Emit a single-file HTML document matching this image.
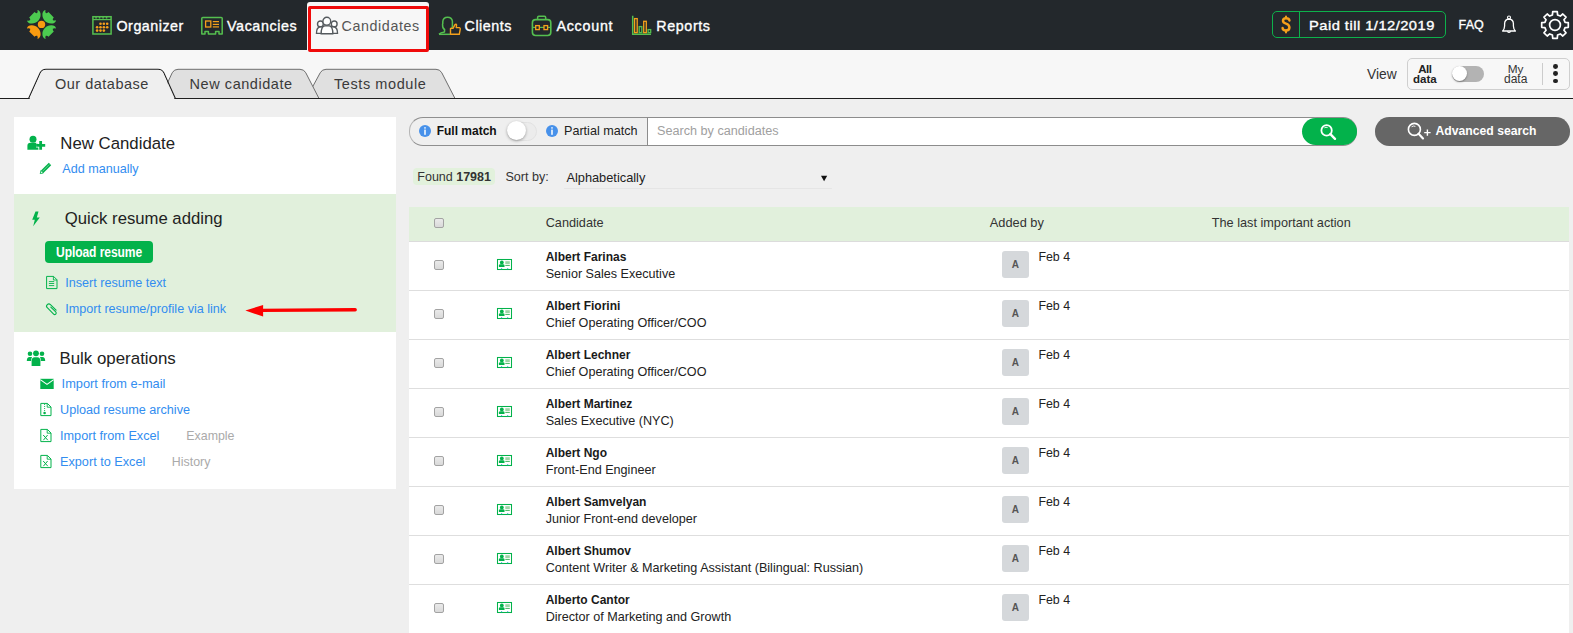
<!DOCTYPE html>
<html><head><meta charset="utf-8"><title>Candidates</title>
<style>
html,body{margin:0;padding:0}
body{width:1573px;height:633px;overflow:hidden;position:relative;background:#efefef;font-family:"Liberation Sans",sans-serif}
.t{position:absolute;white-space:nowrap;line-height:1}
svg{overflow:visible}
</style></head><body>
<div style="position:absolute;left:0px;top:0px;width:1573px;height:50px;background:#23282c"></div>
<div style="position:absolute;left:0px;top:50px;width:1573px;height:48px;background:#f7f7f7"></div>
<div style="position:absolute;left:0px;top:98px;width:1573px;height:1px;background:#1e1e1e"></div>
<div style="position:absolute;left:0px;top:99px;width:1573px;height:534px;background:#efefef"></div>
<svg style="position:absolute;left:0;top:0" width="80" height="50" viewBox="0 0 80 50">
<defs><path id="pt" d="M-4.0,-14.5 C-1.9,-14.3 -0.7,-11.8 -0.9,-9.7 C-0.8,-5.0 -5.0,-0.8 -9.7,-0.9 C-11.8,-0.7 -14.3,-1.9 -14.5,-4.0 Q-12.7,-3.4 -11.3,-4.3 Q-11.0,-6.0 -12.3,-7.0 L-7.0,-12.3 Q-6.0,-11.0 -4.3,-11.3 Q-3.4,-12.7 -4.1,-14.3Z"/></defs>
<g transform="translate(41.5,24.4)">
<use href="#pt" fill="#4ccb50"/>
<use href="#pt" fill="#4ccb50" transform="rotate(90)"/>
<use href="#pt" fill="#4ccb50" transform="rotate(180)"/>
<use href="#pt" fill="#f99b10" transform="rotate(270)"/>
<circle r="3.7" fill="#f99b10"/>
</g></svg>
<svg style="position:absolute;left:90px;top:14px" width="24" height="23" viewBox="0 0 24 23">
<rect x="2.9" y="2.7" width="18.2" height="17.3" fill="none" stroke="#55bf4f" stroke-width="1.5"/>
<line x1="2.9" y1="5.6" x2="21.1" y2="5.6" stroke="#55bf4f" stroke-width="1.2"/>
<g fill="#55bf4f"><rect x="5.3" y="2.5" width="1.5" height="2.1"/><rect x="8.8" y="2.5" width="1.5" height="2.1"/><rect x="12.3" y="2.5" width="1.5" height="2.1"/><rect x="15.8" y="2.5" width="1.5" height="2.1"/></g>
<g fill="#f6a01b">
<circle cx="10.5" cy="9.8" r="1.3"/><circle cx="13.85" cy="9.8" r="1.3"/><circle cx="17.2" cy="9.8" r="1.3"/>
<circle cx="7.1" cy="13.2" r="1.3"/><circle cx="10.5" cy="13.2" r="1.3"/><circle cx="13.85" cy="13.2" r="1.3"/><circle cx="17.2" cy="13.2" r="1.3"/>
<circle cx="7.1" cy="16.6" r="1.3"/><circle cx="10.5" cy="16.6" r="1.3"/><circle cx="13.85" cy="16.6" r="1.3"/>
</g></svg>
<div class="t" style="left:116.5px;top:19px;font-size:14.3px;font-weight:400;color:#fff;-webkit-text-stroke:0.35px #fff;letter-spacing:0.5px">Organizer</div>
<svg style="position:absolute;left:198px;top:14px" width="28" height="24" viewBox="0 0 28 24">
<path d="M3.8,4.2 Q3.8,3.4 4.8,3.4 L23.2,3.4 Q24.2,3.4 24.2,4.2 L24.2,20 L21,20 L21,17.6 L17.6,17.6 L17.6,20 L10.4,20 L10.4,17.6 L7,17.6 L7,20 L3.8,20 Z" fill="none" stroke="#55bf4f" stroke-width="1.5" stroke-linejoin="round"/>
<rect x="7.6" y="7" width="5.2" height="6" fill="none" stroke="#f6a01b" stroke-width="1.3"/>
<g stroke="#f6a01b" stroke-width="1.2"><line x1="14.8" y1="7.6" x2="21" y2="7.6"/><line x1="14.8" y1="10.4" x2="21" y2="10.4"/><line x1="14.8" y1="12.9" x2="21" y2="12.9"/></g>
</svg>
<div class="t" style="left:227.0px;top:19px;font-size:14.3px;font-weight:400;color:#fff;-webkit-text-stroke:0.35px #fff;letter-spacing:0.6px">Vacancies</div>
<div style="position:absolute;left:307px;top:2px;width:122px;height:48px;background:#f7f7f7;border-radius:3px 3px 0 0"></div>
<div style="position:absolute;left:308px;top:5.5px;width:121px;height:46.5px;box-sizing:border-box;border:3.4px solid #f00a0a;border-radius:2px"></div>
<svg style="position:absolute;left:313px;top:13px" width="28" height="24" viewBox="0 0 28 24">
<g fill="#fff" stroke="#555a5e" stroke-width="1.4">
<path d="M3.5,20.4 Q3.3,14.5 7.4,13.5 L11,13.5 Q14,14.5 13.5,20.4 Z"/>
<path d="M14.5,20.4 Q14,14.5 17,13.5 L20.6,13.5 Q24.7,14.5 24.5,20.4 Z"/>
<circle cx="7.4" cy="10.9" r="2.9"/><circle cx="21.2" cy="10.9" r="2.9"/>
<path d="M8.2,20.8 Q8,14 11.5,12.9 L16.5,12.9 Q20,14 19.8,20.8 Z"/>
<circle cx="13.8" cy="8.2" r="3.9"/>
</g></svg>
<div class="t" style="left:341.5px;top:19px;font-size:14.3px;font-weight:400;color:#555;letter-spacing:0.6px">Candidates</div>
<svg style="position:absolute;left:435px;top:13px" width="28" height="26" viewBox="0 0 28 26">
<path d="M4,21.3 Q5.5,19.6 9.5,19 L9.6,16.5 Q7.4,15.5 7.6,12 Q7.4,11 7.8,10.5 L7.8,8.5 Q8.2,4.2 12.6,4.2 Q17,4.2 17.4,8.5 L17.4,13.5 Q17.2,14.8 16,15.6" fill="none" stroke="#55bf4f" stroke-width="1.5" stroke-linejoin="round"/>
<line x1="4" y1="21.3" x2="15.5" y2="21.3" stroke="#55bf4f" stroke-width="1.5"/>
<path d="M15.5,21.3 L15.5,15.4 L18,15.4 L20,11.6 Q21,10.8 21.6,12 L21.2,14.6 L24.4,14.6 Q25.6,15 25.2,16.4 L24.3,21.3 Z" fill="none" stroke="#f6a01b" stroke-width="1.4" stroke-linejoin="round"/>
</svg>
<div class="t" style="left:464.6px;top:19px;font-size:14.3px;font-weight:400;color:#fff;-webkit-text-stroke:0.35px #fff;letter-spacing:0.5px">Clients</div>
<svg style="position:absolute;left:527px;top:12.5px" width="28" height="26" viewBox="0 0 28 26">
<rect x="5.4" y="6.6" width="18.4" height="15.9" rx="3.2" fill="none" stroke="#55bf4f" stroke-width="1.6"/>
<path d="M10.6,6.6 L10.6,4.4 Q10.6,3.2 11.8,3.2 L17.5,3.2 Q18.7,3.2 18.7,4.4 L18.7,6.6" fill="none" stroke="#55bf4f" stroke-width="1.5"/>
<line x1="5.4" y1="14.4" x2="23.8" y2="14.4" stroke="#55bf4f" stroke-width="1.2"/>
<rect x="8.7" y="12.6" width="3.6" height="4" fill="#23282c" stroke="#f6a01b" stroke-width="1.3"/>
<rect x="17" y="12.6" width="3.6" height="4" fill="#23282c" stroke="#f6a01b" stroke-width="1.3"/>
</svg>
<div class="t" style="left:556.4px;top:19px;font-size:14.3px;font-weight:400;color:#fff;-webkit-text-stroke:0.35px #fff;letter-spacing:0.75px">Account</div>
<svg style="position:absolute;left:628px;top:12px" width="28" height="26" viewBox="0 0 28 26">
<path d="M4.7,3.8 L4.7,22.3 L23,22.3" fill="none" stroke="#55bf4f" stroke-width="1.5"/>
<rect x="6.6" y="6.6" width="2.6" height="14" fill="none" stroke="#f6a01b" stroke-width="1.3"/>
<rect x="11.2" y="14.6" width="2.6" height="6" fill="none" stroke="#55bf4f" stroke-width="1.3"/>
<rect x="15.7" y="9.3" width="2.6" height="11.3" fill="none" stroke="#f6a01b" stroke-width="1.3"/>
<rect x="20.1" y="17.6" width="2.6" height="3" fill="none" stroke="#55bf4f" stroke-width="1.3"/>
</svg>
<div class="t" style="left:656.3px;top:19px;font-size:14.3px;font-weight:400;color:#fff;-webkit-text-stroke:0.35px #fff;letter-spacing:0.6px">Reports</div>
<div style="position:absolute;left:1272px;top:11px;width:174px;height:27px;box-sizing:border-box;border:1.3px solid #0db14b;border-radius:5px"></div>
<div style="position:absolute;left:1298.5px;top:11px;width:1.3px;height:27px;background:#0db14b"></div>
<svg style="position:absolute;left:1278px;top:13px" width="16" height="23" viewBox="0 0 16 23">
<path d="M11.4,7.4 Q11,5.2 8,5.2 Q5,5.2 5,7.8 Q5,9.8 8,10.6 Q11.4,11.6 11.4,14.6 Q11.4,17.6 8,17.6 Q4.8,17.6 4.6,15" fill="none" stroke="#f6a01b" stroke-width="2.5" stroke-linecap="round"/>
<path d="M8,3.4 L8,5.2 M8,17.6 L8,19.6" stroke="#f6a01b" stroke-width="2" stroke-linecap="round"/>
</svg>
<div class="t" style="left:1309.3px;top:19px;font-size:13px;font-weight:400;color:#fff;-webkit-text-stroke:0.35px #fff;letter-spacing:0.42px;transform:scaleX(1.13);transform-origin:0 0">Paid till 1/12/2019</div>
<div class="t" style="left:1458.6px;top:19px;font-size:12.5px;font-weight:400;color:#fff;-webkit-text-stroke:0.35px #fff;letter-spacing:0.1px">FAQ</div>
<svg style="position:absolute;left:1498px;top:13px" width="22" height="23" viewBox="0 0 22 23">
<path d="M4.6,18 Q6.4,16.6 6.6,13 L6.6,10.6 Q6.8,6.3 11,6 Q15.2,6.3 15.4,10.6 L15.4,13 Q15.6,16.6 17.4,18 Z" fill="none" stroke="#fff" stroke-width="1.3" stroke-linejoin="round"/>
<circle cx="11" cy="4.5" r="1.5" fill="none" stroke="#fff" stroke-width="1.1"/>
<path d="M9.3,18.4 Q11,20.6 12.7,18.4" fill="none" stroke="#fff" stroke-width="1.1"/>
</svg>
<svg style="position:absolute;left:1540.4px;top:9.8px" width="30" height="30" viewBox="0 0 30 30">
<path d="M12.43,4.92 L12.72,1.69 L17.28,1.69 L17.57,4.92 L20.31,6.06 L22.79,3.98 L26.02,7.21 L23.94,9.69 L25.08,12.43 L28.31,12.72 L28.31,17.28 L25.08,17.57 L23.94,20.31 L26.02,22.79 L22.79,26.02 L20.31,23.94 L17.57,25.08 L17.28,28.31 L12.72,28.31 L12.43,25.08 L9.69,23.94 L7.21,26.02 L3.98,22.79 L6.06,20.31 L4.92,17.57 L1.69,17.28 L1.69,12.72 L4.92,12.43 L6.06,9.69 L3.98,7.21 L7.21,3.98 L9.69,6.06Z" fill="none" stroke="#fff" stroke-width="1.7" stroke-linejoin="round"/>
<circle cx="15" cy="15" r="5.4" fill="none" stroke="#fff" stroke-width="1.7"/>
</svg>
<svg style="position:absolute;left:0;top:60px" width="470" height="40" viewBox="0 60 470 40">
<path d="M306,99 L320.2,72.8 Q322,69.3 326,69.3 L436,69.3 Q440,69.3 441.8,72.8 L455,98.5" fill="#e0e0e0" stroke="#6e6e6e" stroke-width="1"/>
<path d="M160,99 L172.2,72.8 Q174,69.3 178,69.3 L300,69.3 Q304,69.3 305.8,72.8 L319,98.5" fill="#e0e0e0" stroke="#6e6e6e" stroke-width="1"/>
<line x1="0" y1="98.5" x2="470" y2="98.5" stroke="#1e1e1e" stroke-width="1"/>
<path d="M0,98.5 L28.6,98.5 L40.2,72.8 Q42,69.3 46,69.3 L158,69.3 Q162,69.3 163.8,72.8 L175.4,98.5 L470,98.5" fill="none" stroke="#1e1e1e" stroke-width="1.1"/>
<path d="M29.4,99.2 L40.8,73.3 Q42.4,70 46,70 L158,70 Q161.6,70 163.2,73.3 L174.6,99.2 Z" fill="#efefef"/>
</svg>
<div class="t" style="left:55.0px;top:77px;font-size:14.5px;font-weight:400;color:#3a3a3a;letter-spacing:0.5px">Our database</div>
<div class="t" style="left:189.6px;top:77px;font-size:14.5px;font-weight:400;color:#3a3a3a;letter-spacing:0.55px">New candidate</div>
<div class="t" style="left:334.0px;top:77px;font-size:14.5px;font-weight:400;color:#3a3a3a;letter-spacing:0.58px">Tests module</div>
<div class="t" style="left:1367.0px;top:68px;font-size:13.8px;font-weight:400;color:#333;">View</div>
<div style="position:absolute;left:1407px;top:58px;width:162.5px;height:31.5px;box-sizing:border-box;border:1px solid #cfcfcf;border-radius:5px"></div>
<div class="t" style="left:1418.2px;top:64px;font-size:11.5px;font-weight:700;color:#222;letter-spacing:-0.5px">All</div>
<div class="t" style="left:1413.0px;top:74px;font-size:11.5px;font-weight:700;color:#222;">data</div>
<div style="position:absolute;left:1451.7px;top:65.5px;width:32.5px;height:16.5px;background:#b3b3b3;border-radius:8.5px"></div>
<div style="position:absolute;left:1451.7px;top:65.5px;width:15.6px;height:15.6px;background:#fff;border-radius:50%;box-shadow:0 1px 2px rgba(0,0,0,.35)"></div>
<div class="t" style="left:1507.8px;top:64px;font-size:11.8px;font-weight:400;color:#333;">My</div>
<div class="t" style="left:1504.0px;top:73px;font-size:12px;font-weight:400;color:#333;">data</div>
<div style="position:absolute;left:1542.3px;top:63.3px;width:1px;height:21.4px;background:#cccccc"></div>
<div style="position:absolute;left:1553px;top:63.9px;width:4.8px;height:4.8px;background:#222;border-radius:50%"></div>
<div style="position:absolute;left:1553px;top:71.3px;width:4.8px;height:4.8px;background:#222;border-radius:50%"></div>
<div style="position:absolute;left:1553px;top:78.6px;width:4.8px;height:4.8px;background:#222;border-radius:50%"></div>
<div style="position:absolute;left:14px;top:117px;width:382px;height:372px;background:#fff"></div>
<div style="position:absolute;left:14px;top:194px;width:382px;height:138px;background:#e1f0dc"></div>
<svg style="position:absolute;left:25px;top:134px" width="22" height="18" viewBox="0 0 22 18">
<circle cx="8" cy="5.3" r="3.5" fill="#03b24b"/>
<path d="M2.4,15.8 L2.4,12 Q2.4,8.8 5.6,8.8 L10.5,8.8 Q13.7,8.8 13.7,12 L13.7,15.8 Z" fill="#03b24b"/>
<path d="M11.1,11.4 L20.2,11.4 M15.65,7 L15.65,15.8" stroke="#fff" stroke-width="4.4"/>
<path d="M11.1,11.4 L20.2,11.4 M15.65,7 L15.65,15.8" stroke="#03b24b" stroke-width="2.8"/>
</svg>
<div class="t" style="left:60.3px;top:136px;font-size:16.8px;font-weight:400;color:#222;">New Candidate</div>
<svg style="position:absolute;left:38px;top:161px" width="16" height="15" viewBox="0 0 16 15">
<path d="M2.2,12.6 L3,9.6 L10.8,1.8 L13.2,4.2 L5.4,12 Z" fill="#03b24b"/>
<line x1="4.3" y1="10.5" x2="11.4" y2="3.4" stroke="#fff" stroke-width="0.5" opacity="0.8"/>
<path d="M2.2,12.6 L3,9.6 L5.4,12 Z" fill="#fff" stroke="#03b24b" stroke-width="0.8"/>
</svg>
<div class="t" style="left:62.3px;top:163px;font-size:12.6px;font-weight:400;color:#328df0;">Add manually</div>
<svg style="position:absolute;left:29px;top:209px" width="14" height="20" viewBox="0 0 14 20">
<path d="M6.5,2.6 L9.5,2.6 L7.8,8.4 L10.8,8.4 L4.2,17.2 L5.8,10.8 L3.2,10.8 Z" fill="#03b24b"/>
</svg>
<div class="t" style="left:64.8px;top:211px;font-size:16.7px;font-weight:400;color:#222;">Quick resume adding</div>
<div style="position:absolute;left:45px;top:240.8px;width:108px;height:22px;background:#03b24b;border-radius:4px"></div>
<div class="t" style="left:55.9px;top:246px;font-size:13.8px;font-weight:700;color:#fff;letter-spacing:-0.1px;transform:scaleX(0.875);transform-origin:0 0">Upload resume</div>
<svg style="position:absolute;left:44px;top:274px" width="16" height="17" viewBox="0 0 16 17">
<path d="M2.6,2.4 L9.6,2.4 L13,5.8 L13,14.6 L2.6,14.6 Z" fill="none" stroke="#03b24b" stroke-width="1"/>
<path d="M9.4,2.4 L9.4,6 L13,6" fill="none" stroke="#03b24b" stroke-width="0.9"/>
<g stroke="#03b24b" stroke-width="0.9"><line x1="4.9" y1="7.6" x2="10.2" y2="7.6"/><line x1="4.9" y1="9.5" x2="10.2" y2="9.5"/><line x1="4.9" y1="11.6" x2="10.2" y2="11.6"/></g>
</svg>
<div class="t" style="left:65.2px;top:277px;font-size:12.6px;font-weight:400;color:#328df0;">Insert resume text</div>
<svg style="position:absolute;left:42px;top:298.5px" width="20" height="21" viewBox="-10 -10.5 20 21">
<g transform="rotate(-45)"><path d="M0.9,-2.6 L0.9,4.4 A1.5,1.5 0 0 1 -2.1,4.4 L-2.1,-4.6 A2.25,2.25 0 0 1 2.4,-4.6 L2.4,3.4" fill="none" stroke="#03b24b" stroke-width="1.1" stroke-linecap="round"/></g>
</svg>
<div class="t" style="left:65.2px;top:303px;font-size:12.6px;font-weight:400;color:#328df0;">Import resume/profile via link</div>
<svg style="position:absolute;left:240px;top:300px" width="120" height="20" viewBox="240 300 120 20">
<line x1="260" y1="310.4" x2="355.2" y2="309.8" stroke="#fd0000" stroke-width="3.4" stroke-linecap="round"/>
<path d="M245.4,310.6 L263.1,304.9 L263.1,316.6 Z" fill="#fd0000"/>
</svg>
<svg style="position:absolute;left:25px;top:348px" width="22" height="20" viewBox="0 0 22 20">
<circle cx="11" cy="5.3" r="2.9" fill="#03b24b"/>
<circle cx="5" cy="5.8" r="2.3" fill="#03b24b"/>
<circle cx="17" cy="5.8" r="2.3" fill="#03b24b"/>
<path d="M1.8,13 Q1.8,9 4.6,9 L7,9 Q6,11 6.2,13 Z" fill="#03b24b"/>
<path d="M20.2,13 Q20.2,9 17.4,9 L15,9 Q16,11 15.8,13 Z" fill="#03b24b"/>
<path d="M6.6,18 L6.6,13 Q6.6,9.2 9.6,9.2 L12.4,9.2 Q15.4,9.2 15.4,13 L15.4,18 Z" fill="#03b24b"/>
</svg>
<div class="t" style="left:59.4px;top:351px;font-size:16.9px;font-weight:400;color:#222;">Bulk operations</div>
<svg style="position:absolute;left:39px;top:377px" width="16" height="14" viewBox="0 0 16 14">
<rect x="1.3" y="1.8" width="13.4" height="10.2" fill="#03b24b"/>
<path d="M1.3,2.6 L8,7.4 L14.7,2.6" fill="none" stroke="#fff" stroke-width="1.1"/>
</svg>
<div class="t" style="left:61.6px;top:378px;font-size:12.8px;font-weight:400;color:#328df0;">Import from e-mail</div>
<svg style="position:absolute;left:38px;top:401px" width="16" height="17" viewBox="0 0 16 17">
<path d="M2.8,2.4 L9.4,2.4 L13,6 L13,14.6 L2.8,14.6 Z" fill="none" stroke="#03b24b" stroke-width="1"/>
<path d="M9.2,2.4 L9.2,6.2 L13,6.2" fill="none" stroke="#03b24b" stroke-width="0.9"/>
<line x1="6.6" y1="3" x2="6.6" y2="10" stroke="#03b24b" stroke-width="0.9" stroke-dasharray="1,1"/>
<circle cx="6.6" cy="12" r="1.3" fill="#03b24b"/>
</svg>
<div class="t" style="left:60.0px;top:404px;font-size:12.65px;font-weight:400;color:#328df0;">Upload resume archive</div>
<svg style="position:absolute;left:38px;top:426.8px" width="16" height="17" viewBox="0 0 16 17">
<path d="M2.8,2.4 L9.4,2.4 L13,6 L13,14.6 L2.8,14.6 Z" fill="none" stroke="#03b24b" stroke-width="1"/>
<path d="M9.2,2.4 L9.2,6.2 L13,6.2" fill="none" stroke="#03b24b" stroke-width="0.9"/>
<path d="M5.2,8 L9.8,13.2 M9.6,8 L5.4,13.2" stroke="#03b24b" stroke-width="1"/>
</svg>
<div class="t" style="left:60.0px;top:430px;font-size:12.7px;font-weight:400;color:#328df0;">Import from Excel</div>
<div class="t" style="left:186.3px;top:430px;font-size:12.4px;font-weight:400;color:#aaa;">Example</div>
<svg style="position:absolute;left:38px;top:452.8px" width="16" height="17" viewBox="0 0 16 17">
<path d="M2.8,2.4 L9.4,2.4 L13,6 L13,14.6 L2.8,14.6 Z" fill="none" stroke="#03b24b" stroke-width="1"/>
<path d="M9.2,2.4 L9.2,6.2 L13,6.2" fill="none" stroke="#03b24b" stroke-width="0.9"/>
<path d="M5.2,8 L9.8,13.2 M9.6,8 L5.4,13.2" stroke="#03b24b" stroke-width="1"/>
</svg>
<div class="t" style="left:60.0px;top:456px;font-size:12.7px;font-weight:400;color:#328df0;">Export to Excel</div>
<div class="t" style="left:171.8px;top:456px;font-size:12.4px;font-weight:400;color:#aaa;">History</div>
<div style="position:absolute;left:409px;top:117px;width:948px;height:28.5px;box-sizing:border-box;border:1px solid #8f8f8f;border-left-color:#b5b5b5;border-radius:14px;background:#efefef"></div>
<div style="position:absolute;left:647.4px;top:117px;width:680px;height:28.5px;box-sizing:border-box;border:1px solid #8c8c8c;border-right:none;background:#fff;border-radius:0 14px 14px 0"></div>
<div style="position:absolute;left:1302px;top:117.8px;width:54.6px;height:27.6px;background:#03b24b;border-radius:14px"></div>
<svg style="position:absolute;left:1317px;top:121px" width="22" height="22" viewBox="0 0 22 22">
<circle cx="9.6" cy="9.4" r="5.2" fill="none" stroke="#fff" stroke-width="1.8"/>
<path d="M13.4,13.2 L18,17.8" stroke="#fff" stroke-width="2.4" stroke-linecap="round"/>
<path d="M7.4,6.8 Q9,5.8 10.6,6.6" stroke="#fff" stroke-width="0.9" fill="none"/>
</svg>
<svg style="position:absolute;left:418px;top:123.5px" width="14" height="14" viewBox="0 0 14 14">
<circle cx="7" cy="7" r="6" fill="#4791ea"/><rect x="6.25" y="3.2" width="1.5" height="1.4" fill="#fff"/><rect x="6.25" y="5.6" width="1.5" height="5.2" fill="#fff"/></svg>
<svg style="position:absolute;left:544.9px;top:123.5px" width="14" height="14" viewBox="0 0 14 14">
<circle cx="7" cy="7" r="6" fill="#4791ea"/><rect x="6.25" y="3.2" width="1.5" height="1.4" fill="#fff"/><rect x="6.25" y="5.6" width="1.5" height="5.2" fill="#fff"/></svg>
<div class="t" style="left:436.7px;top:125px;font-size:12px;font-weight:700;color:#111;">Full match</div>
<div style="position:absolute;left:506.6px;top:121.6px;width:30px;height:19px;box-sizing:border-box;background:#ececec;border:1px solid #e2e2e2;border-radius:10px"></div>
<div style="position:absolute;left:506.6px;top:121.4px;width:19px;height:19px;background:#fff;border-radius:50%;box-shadow:0 1px 3px rgba(0,0,0,.35)"></div>
<div class="t" style="left:564.0px;top:125px;font-size:12.6px;font-weight:400;color:#222;">Partial match</div>
<div class="t" style="left:657.0px;top:125px;font-size:12.65px;font-weight:400;color:#a0a0a0;">Search by candidates</div>
<div style="position:absolute;left:1375px;top:117.2px;width:195px;height:28.6px;background:#666;border-radius:14.3px"></div>
<svg style="position:absolute;left:1404px;top:119px" width="30" height="24" viewBox="0 0 30 24">
<circle cx="10.4" cy="10.4" r="6" fill="none" stroke="#fff" stroke-width="1.6"/>
<path d="M14.6,14.8 L19,19.4" stroke="#fff" stroke-width="2.2" stroke-linecap="round"/>
<path d="M7.6,7.8 Q9.4,6.4 11.4,7.4" stroke="#fff" stroke-width="0.9" fill="none"/>
<path d="M20.2,13.6 L26.6,13.6 M23.4,10.4 L23.4,16.8" stroke="#fff" stroke-width="1.4"/>
</svg>
<div class="t" style="left:1435.5px;top:125px;font-size:12.2px;font-weight:700;color:#fff;">Advanced search</div>
<div style="position:absolute;left:413.3px;top:168.3px;width:81.3px;height:17.1px;background:#e2f1dc;border-radius:4px"></div>
<div class="t" style="left:417.3px;top:171px;font-size:12.5px;font-weight:400;color:#333;">Found <b>17981</b></div>
<div class="t" style="left:505.4px;top:171px;font-size:12.6px;font-weight:400;color:#333;">Sort by:</div>
<div class="t" style="left:566.4px;top:172px;font-size:12.8px;font-weight:400;color:#222;">Alphabetically</div>
<svg style="position:absolute;left:819px;top:174px" width="10" height="9" viewBox="0 0 10 9"><path d="M2,1.8 L8.2,1.8 L5.1,7.2 Z" fill="#111"/></svg>
<div style="position:absolute;left:564px;top:187.5px;width:268px;height:1px;background:#e5e5e5;border-radius:1px"></div>
<div style="position:absolute;left:409px;top:207px;width:1160px;height:34px;background:#e1f0dc"></div>
<div style="position:absolute;left:409px;top:241px;width:1160px;height:392px;background:#fff"></div>
<div style="position:absolute;left:409px;top:240.5px;width:1160px;height:1.5px;background:#dcdcdc"></div>
<div style="position:absolute;left:434px;top:218.2px;width:10px;height:10px;box-sizing:border-box;border:1px solid #a3a3a3;border-radius:2px;background:linear-gradient(#eaeaea,#d9d9d9)"></div>
<div class="t" style="left:545.7px;top:217px;font-size:12.7px;font-weight:400;color:#333;">Candidate</div>
<div class="t" style="left:989.8px;top:217px;font-size:12.8px;font-weight:400;color:#333;">Added by</div>
<div class="t" style="left:1211.8px;top:217px;font-size:12.7px;font-weight:400;color:#333;">The last important action</div>
<div style="position:absolute;left:434px;top:260px;width:10px;height:10px;box-sizing:border-box;border:1px solid #a3a3a3;border-radius:2px;background:linear-gradient(#eaeaea,#d9d9d9)"></div>
<svg style="position:absolute;left:495px;top:256px" width="19" height="16" viewBox="0 0 19 16">
<rect x="2.5" y="3.5" width="14" height="10" fill="#fff" stroke="#03b24b" stroke-width="1.05"/>
<circle cx="6.8" cy="6.4" r="1.9" fill="#03b24b"/><path d="M3.9,11 L3.9,9.6 Q3.9,8.2 5.4,8.2 L8,8.2 Q9.5,8.2 9.5,9.6 L9.5,11 Z" fill="#03b24b"/>
<rect x="10.3" y="5.2" width="4.5" height="2.8" fill="#9dd6a6"/>
<line x1="10.3" y1="9.4" x2="14.8" y2="9.4" stroke="#3fb55c" stroke-width="1"/>
<rect x="6.1" y="12.2" width="1" height="1" fill="#2a9bd0"/><rect x="12.2" y="12.2" width="1" height="1" fill="#2a9bd0"/>
</svg>
<div class="t" style="left:545.7px;top:251px;font-size:12px;font-weight:700;color:#1a1a1a;">Albert Farinas</div>
<div class="t" style="left:545.7px;top:268px;font-size:12.6px;font-weight:400;color:#222;">Senior Sales Executive</div>
<div style="position:absolute;left:1002px;top:251px;width:27px;height:27px;background:#d5d8db;border-radius:3px"></div>
<div class="t" style="left:1011.8px;top:260px;font-size:10px;font-weight:700;color:#555;">A</div>
<div class="t" style="left:1038.4px;top:251px;font-size:12.4px;font-weight:400;color:#222;">Feb 4</div>
<div style="position:absolute;left:409px;top:289.5px;width:1160px;height:1.5px;background:#dedede"></div>
<div style="position:absolute;left:434px;top:309px;width:10px;height:10px;box-sizing:border-box;border:1px solid #a3a3a3;border-radius:2px;background:linear-gradient(#eaeaea,#d9d9d9)"></div>
<svg style="position:absolute;left:495px;top:305px" width="19" height="16" viewBox="0 0 19 16">
<rect x="2.5" y="3.5" width="14" height="10" fill="#fff" stroke="#03b24b" stroke-width="1.05"/>
<circle cx="6.8" cy="6.4" r="1.9" fill="#03b24b"/><path d="M3.9,11 L3.9,9.6 Q3.9,8.2 5.4,8.2 L8,8.2 Q9.5,8.2 9.5,9.6 L9.5,11 Z" fill="#03b24b"/>
<rect x="10.3" y="5.2" width="4.5" height="2.8" fill="#9dd6a6"/>
<line x1="10.3" y1="9.4" x2="14.8" y2="9.4" stroke="#3fb55c" stroke-width="1"/>
<rect x="6.1" y="12.2" width="1" height="1" fill="#2a9bd0"/><rect x="12.2" y="12.2" width="1" height="1" fill="#2a9bd0"/>
</svg>
<div class="t" style="left:545.7px;top:300px;font-size:12px;font-weight:700;color:#1a1a1a;">Albert Fiorini</div>
<div class="t" style="left:545.7px;top:317px;font-size:12.6px;font-weight:400;color:#222;">Chief Operating Officer/COO</div>
<div style="position:absolute;left:1002px;top:300px;width:27px;height:27px;background:#d5d8db;border-radius:3px"></div>
<div class="t" style="left:1011.8px;top:309px;font-size:10px;font-weight:700;color:#555;">A</div>
<div class="t" style="left:1038.4px;top:300px;font-size:12.4px;font-weight:400;color:#222;">Feb 4</div>
<div style="position:absolute;left:409px;top:338.5px;width:1160px;height:1.5px;background:#dedede"></div>
<div style="position:absolute;left:434px;top:358px;width:10px;height:10px;box-sizing:border-box;border:1px solid #a3a3a3;border-radius:2px;background:linear-gradient(#eaeaea,#d9d9d9)"></div>
<svg style="position:absolute;left:495px;top:354px" width="19" height="16" viewBox="0 0 19 16">
<rect x="2.5" y="3.5" width="14" height="10" fill="#fff" stroke="#03b24b" stroke-width="1.05"/>
<circle cx="6.8" cy="6.4" r="1.9" fill="#03b24b"/><path d="M3.9,11 L3.9,9.6 Q3.9,8.2 5.4,8.2 L8,8.2 Q9.5,8.2 9.5,9.6 L9.5,11 Z" fill="#03b24b"/>
<rect x="10.3" y="5.2" width="4.5" height="2.8" fill="#9dd6a6"/>
<line x1="10.3" y1="9.4" x2="14.8" y2="9.4" stroke="#3fb55c" stroke-width="1"/>
<rect x="6.1" y="12.2" width="1" height="1" fill="#2a9bd0"/><rect x="12.2" y="12.2" width="1" height="1" fill="#2a9bd0"/>
</svg>
<div class="t" style="left:545.7px;top:349px;font-size:12px;font-weight:700;color:#1a1a1a;">Albert Lechner</div>
<div class="t" style="left:545.7px;top:366px;font-size:12.6px;font-weight:400;color:#222;">Chief Operating Officer/COO</div>
<div style="position:absolute;left:1002px;top:349px;width:27px;height:27px;background:#d5d8db;border-radius:3px"></div>
<div class="t" style="left:1011.8px;top:358px;font-size:10px;font-weight:700;color:#555;">A</div>
<div class="t" style="left:1038.4px;top:349px;font-size:12.4px;font-weight:400;color:#222;">Feb 4</div>
<div style="position:absolute;left:409px;top:387.5px;width:1160px;height:1.5px;background:#dedede"></div>
<div style="position:absolute;left:434px;top:407px;width:10px;height:10px;box-sizing:border-box;border:1px solid #a3a3a3;border-radius:2px;background:linear-gradient(#eaeaea,#d9d9d9)"></div>
<svg style="position:absolute;left:495px;top:403px" width="19" height="16" viewBox="0 0 19 16">
<rect x="2.5" y="3.5" width="14" height="10" fill="#fff" stroke="#03b24b" stroke-width="1.05"/>
<circle cx="6.8" cy="6.4" r="1.9" fill="#03b24b"/><path d="M3.9,11 L3.9,9.6 Q3.9,8.2 5.4,8.2 L8,8.2 Q9.5,8.2 9.5,9.6 L9.5,11 Z" fill="#03b24b"/>
<rect x="10.3" y="5.2" width="4.5" height="2.8" fill="#9dd6a6"/>
<line x1="10.3" y1="9.4" x2="14.8" y2="9.4" stroke="#3fb55c" stroke-width="1"/>
<rect x="6.1" y="12.2" width="1" height="1" fill="#2a9bd0"/><rect x="12.2" y="12.2" width="1" height="1" fill="#2a9bd0"/>
</svg>
<div class="t" style="left:545.7px;top:398px;font-size:12px;font-weight:700;color:#1a1a1a;">Albert Martinez</div>
<div class="t" style="left:545.7px;top:415px;font-size:12.6px;font-weight:400;color:#222;">Sales Executive (NYC)</div>
<div style="position:absolute;left:1002px;top:398px;width:27px;height:27px;background:#d5d8db;border-radius:3px"></div>
<div class="t" style="left:1011.8px;top:407px;font-size:10px;font-weight:700;color:#555;">A</div>
<div class="t" style="left:1038.4px;top:398px;font-size:12.4px;font-weight:400;color:#222;">Feb 4</div>
<div style="position:absolute;left:409px;top:436.5px;width:1160px;height:1.5px;background:#dedede"></div>
<div style="position:absolute;left:434px;top:456px;width:10px;height:10px;box-sizing:border-box;border:1px solid #a3a3a3;border-radius:2px;background:linear-gradient(#eaeaea,#d9d9d9)"></div>
<svg style="position:absolute;left:495px;top:452px" width="19" height="16" viewBox="0 0 19 16">
<rect x="2.5" y="3.5" width="14" height="10" fill="#fff" stroke="#03b24b" stroke-width="1.05"/>
<circle cx="6.8" cy="6.4" r="1.9" fill="#03b24b"/><path d="M3.9,11 L3.9,9.6 Q3.9,8.2 5.4,8.2 L8,8.2 Q9.5,8.2 9.5,9.6 L9.5,11 Z" fill="#03b24b"/>
<rect x="10.3" y="5.2" width="4.5" height="2.8" fill="#9dd6a6"/>
<line x1="10.3" y1="9.4" x2="14.8" y2="9.4" stroke="#3fb55c" stroke-width="1"/>
<rect x="6.1" y="12.2" width="1" height="1" fill="#2a9bd0"/><rect x="12.2" y="12.2" width="1" height="1" fill="#2a9bd0"/>
</svg>
<div class="t" style="left:545.7px;top:447px;font-size:12px;font-weight:700;color:#1a1a1a;">Albert Ngo</div>
<div class="t" style="left:545.7px;top:464px;font-size:12.6px;font-weight:400;color:#222;">Front-End Engineer</div>
<div style="position:absolute;left:1002px;top:447px;width:27px;height:27px;background:#d5d8db;border-radius:3px"></div>
<div class="t" style="left:1011.8px;top:456px;font-size:10px;font-weight:700;color:#555;">A</div>
<div class="t" style="left:1038.4px;top:447px;font-size:12.4px;font-weight:400;color:#222;">Feb 4</div>
<div style="position:absolute;left:409px;top:485.5px;width:1160px;height:1.5px;background:#dedede"></div>
<div style="position:absolute;left:434px;top:505px;width:10px;height:10px;box-sizing:border-box;border:1px solid #a3a3a3;border-radius:2px;background:linear-gradient(#eaeaea,#d9d9d9)"></div>
<svg style="position:absolute;left:495px;top:501px" width="19" height="16" viewBox="0 0 19 16">
<rect x="2.5" y="3.5" width="14" height="10" fill="#fff" stroke="#03b24b" stroke-width="1.05"/>
<circle cx="6.8" cy="6.4" r="1.9" fill="#03b24b"/><path d="M3.9,11 L3.9,9.6 Q3.9,8.2 5.4,8.2 L8,8.2 Q9.5,8.2 9.5,9.6 L9.5,11 Z" fill="#03b24b"/>
<rect x="10.3" y="5.2" width="4.5" height="2.8" fill="#9dd6a6"/>
<line x1="10.3" y1="9.4" x2="14.8" y2="9.4" stroke="#3fb55c" stroke-width="1"/>
<rect x="6.1" y="12.2" width="1" height="1" fill="#2a9bd0"/><rect x="12.2" y="12.2" width="1" height="1" fill="#2a9bd0"/>
</svg>
<div class="t" style="left:545.7px;top:496px;font-size:12px;font-weight:700;color:#1a1a1a;">Albert Samvelyan</div>
<div class="t" style="left:545.7px;top:513px;font-size:12.6px;font-weight:400;color:#222;">Junior Front-end developer</div>
<div style="position:absolute;left:1002px;top:496px;width:27px;height:27px;background:#d5d8db;border-radius:3px"></div>
<div class="t" style="left:1011.8px;top:505px;font-size:10px;font-weight:700;color:#555;">A</div>
<div class="t" style="left:1038.4px;top:496px;font-size:12.4px;font-weight:400;color:#222;">Feb 4</div>
<div style="position:absolute;left:409px;top:534.5px;width:1160px;height:1.5px;background:#dedede"></div>
<div style="position:absolute;left:434px;top:554px;width:10px;height:10px;box-sizing:border-box;border:1px solid #a3a3a3;border-radius:2px;background:linear-gradient(#eaeaea,#d9d9d9)"></div>
<svg style="position:absolute;left:495px;top:550px" width="19" height="16" viewBox="0 0 19 16">
<rect x="2.5" y="3.5" width="14" height="10" fill="#fff" stroke="#03b24b" stroke-width="1.05"/>
<circle cx="6.8" cy="6.4" r="1.9" fill="#03b24b"/><path d="M3.9,11 L3.9,9.6 Q3.9,8.2 5.4,8.2 L8,8.2 Q9.5,8.2 9.5,9.6 L9.5,11 Z" fill="#03b24b"/>
<rect x="10.3" y="5.2" width="4.5" height="2.8" fill="#9dd6a6"/>
<line x1="10.3" y1="9.4" x2="14.8" y2="9.4" stroke="#3fb55c" stroke-width="1"/>
<rect x="6.1" y="12.2" width="1" height="1" fill="#2a9bd0"/><rect x="12.2" y="12.2" width="1" height="1" fill="#2a9bd0"/>
</svg>
<div class="t" style="left:545.7px;top:545px;font-size:12px;font-weight:700;color:#1a1a1a;">Albert Shumov</div>
<div class="t" style="left:545.7px;top:562px;font-size:12.6px;font-weight:400;color:#222;">Content Writer &amp; Marketing Assistant (Bilingual: Russian)</div>
<div style="position:absolute;left:1002px;top:545px;width:27px;height:27px;background:#d5d8db;border-radius:3px"></div>
<div class="t" style="left:1011.8px;top:554px;font-size:10px;font-weight:700;color:#555;">A</div>
<div class="t" style="left:1038.4px;top:545px;font-size:12.4px;font-weight:400;color:#222;">Feb 4</div>
<div style="position:absolute;left:409px;top:583.5px;width:1160px;height:1.5px;background:#dedede"></div>
<div style="position:absolute;left:434px;top:603px;width:10px;height:10px;box-sizing:border-box;border:1px solid #a3a3a3;border-radius:2px;background:linear-gradient(#eaeaea,#d9d9d9)"></div>
<svg style="position:absolute;left:495px;top:599px" width="19" height="16" viewBox="0 0 19 16">
<rect x="2.5" y="3.5" width="14" height="10" fill="#fff" stroke="#03b24b" stroke-width="1.05"/>
<circle cx="6.8" cy="6.4" r="1.9" fill="#03b24b"/><path d="M3.9,11 L3.9,9.6 Q3.9,8.2 5.4,8.2 L8,8.2 Q9.5,8.2 9.5,9.6 L9.5,11 Z" fill="#03b24b"/>
<rect x="10.3" y="5.2" width="4.5" height="2.8" fill="#9dd6a6"/>
<line x1="10.3" y1="9.4" x2="14.8" y2="9.4" stroke="#3fb55c" stroke-width="1"/>
<rect x="6.1" y="12.2" width="1" height="1" fill="#2a9bd0"/><rect x="12.2" y="12.2" width="1" height="1" fill="#2a9bd0"/>
</svg>
<div class="t" style="left:545.7px;top:594px;font-size:12px;font-weight:700;color:#1a1a1a;">Alberto Cantor</div>
<div class="t" style="left:545.7px;top:611px;font-size:12.6px;font-weight:400;color:#222;">Director of Marketing and Growth</div>
<div style="position:absolute;left:1002px;top:594px;width:27px;height:27px;background:#d5d8db;border-radius:3px"></div>
<div class="t" style="left:1011.8px;top:603px;font-size:10px;font-weight:700;color:#555;">A</div>
<div class="t" style="left:1038.4px;top:594px;font-size:12.4px;font-weight:400;color:#222;">Feb 4</div>
</body></html>
